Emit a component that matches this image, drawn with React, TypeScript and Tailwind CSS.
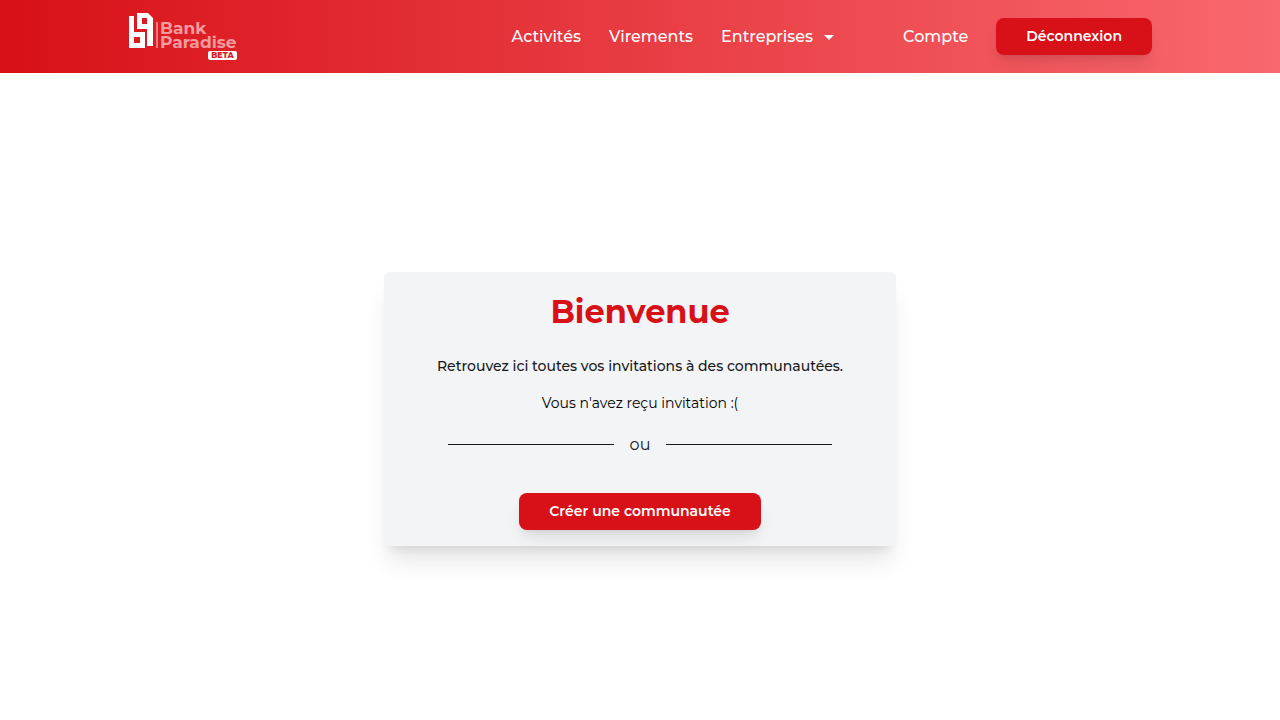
import type { ReactNode } from "react";

function Logo() {
  return (
    <svg viewBox="0 0 110 48" className="h-12 w-[110px]" role="img" aria-label="Bank Paradise beta">
      <path fill="#fff" fillRule="evenodd" d="M1 3H6V19H17V35H1ZM6 24V30H12V24Z" />
      <path fill="#fff" fillRule="evenodd" d="M9 0H20L25 5V33H19V16H9ZM14 5V11H19V5Z" />
      <path fill="#f0797d" d="M28 9H30V35H28Z" />
      <g fill="#f59a9d" fontFamily="Montserrat, Inter, sans-serif" fontWeight="700" fontSize="17">
        <text x="32" y="21">Bank</text>
        <text x="32" y="35">Paradise</text>
      </g>
      <rect x="80" y="38" width="29" height="9" rx="2" fill="#fff" />
      <text x="94.5" y="45" textAnchor="middle" fill="#d91820" fontFamily="Montserrat, Inter, sans-serif" fontWeight="800" fontSize="8">BETA</text>
    </svg>
  );
}

function PrimaryButton({ children }: { children: ReactNode }) {
  return (
    <button type="button" className="rounded-lg bg-[#d81017] px-[30px] py-2 text-sm leading-[21px] font-semibold text-white shadow-lg">
      {children}
    </button>
  );
}

export default function App() {
  return (
    <div className="flex min-h-screen flex-col bg-white font-['Montserrat','Inter',sans-serif]">
      <header className="flex h-[73px] items-center justify-between bg-linear-to-r/srgb from-[#d81017] to-[#f8686e] px-[10%]">
        <a href="#" className="block">
          <Logo />
        </a>
        <nav className="flex items-center gap-7 text-base leading-6 font-medium text-white">
          <a href="#">Activités</a>
          <a href="#">Virements</a>
          <button type="button" className="mr-[34px] flex items-center">
            Entreprises
            <svg viewBox="0 0 24 24" className="ml-1 size-6" fill="currentColor" aria-hidden="true">
              <path d="M7 10l5 5 5-5z" />
            </svg>
          </button>
          <a href="#">Compte</a>
          <PrimaryButton>Déconnexion</PrimaryButton>
        </nav>
      </header>
      <main className="flex flex-1 items-center justify-center pt-12 pb-6">
        <section className="flex w-2/5 flex-col items-center rounded-md bg-gray-100 pt-5 pb-4 text-center text-sm leading-[21px] shadow-xl">
          <h1 className="text-[32px] leading-10 font-bold text-[#d81017]">Bienvenue</h1>
          <p className="mt-6 font-medium text-zinc-900">Retrouvez ici toutes vos invitations à des communautées.</p>
          <p className="mt-4 text-black">Vous n'avez reçu invitation :(</p>
          <div className="mt-[19px] flex w-3/4 items-center gap-4 text-base leading-6 text-zinc-900">
            <span className="h-px flex-1 bg-zinc-900" />
            ou
            <span className="h-px flex-1 bg-zinc-900" />
          </div>
          <div className="mt-9">
            <PrimaryButton>Créer une communautée</PrimaryButton>
          </div>
        </section>
      </main>
    </div>
  );
}
